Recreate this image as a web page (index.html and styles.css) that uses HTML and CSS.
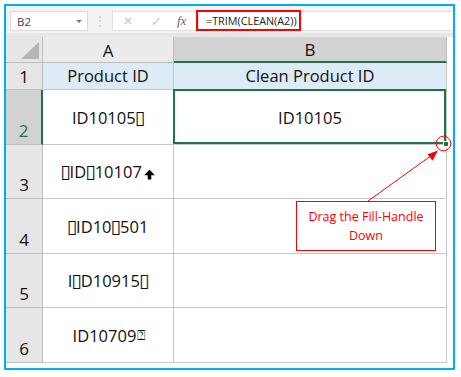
FILE: index.html
```html
<!DOCTYPE html>
<html>
<head>
<meta charset="utf-8">
<link rel="stylesheet" href="styles.css">
</head>
<body>
<div class="frame">
  <div class="toolbar">
    <div class="namebox"><span>B2</span><span class="dd"></span></div>
    <div class="dots">⋮</div>
    <div class="fbtns"><span class="x">✕</span><span class="ok">✓</span><span class="fx">fx</span></div>
    <div class="fbox"><span class="formula">=TRIM(CLEAN(A2))</span></div>
  </div>
  <div class="sheet">
    <div class="c corner"><span class="tri"></span></div>
    <div class="c colh">A</div>
    <div class="c colh sel">B</div>

    <div class="c rowh mid">1</div>
    <div class="c hdr">Product ID</div>
    <div class="c hdr">Clean Product ID</div>

    <div class="c rowh rsel">2</div>
    <div class="c val">ID10105<span class="tofu">▯</span></div>
    <div class="c val active">ID10105<span class="handle"></span></div>

    <div class="c rowh">3</div>
    <div class="c val"><span class="tofu">▯</span>ID<span class="tofu">▯</span>10107<svg class="up" width="11" height="11" viewBox="0 0 10 10"><path d="M5 0.5 L9.8 5.6 L6.6 5.6 L6.6 9.5 L3.4 9.5 L3.4 5.6 L0.2 5.6 Z" fill="#000"/></svg></div>
    <div class="c"></div>

    <div class="c rowh">4</div>
    <div class="c val"><span class="tofu">▯</span>ID10<span class="tofu">▯</span>501</div>
    <div class="c"></div>

    <div class="c rowh">5</div>
    <div class="c val">I<span class="tofu">▯</span>D10915<span class="tofu">▯</span></div>
    <div class="c"></div>

    <div class="c rowh">6</div>
    <div class="c val shift">ID10709<span class="q">⍰</span></div>
    <div class="c"></div>
  </div>
  <div class="callout">Drag the Fill-Handle<br>Down</div>
  <svg class="overlay" width="447" height="363" viewBox="0 0 447 363">
    <circle cx="437.5" cy="137.5" r="7.3" fill="none" stroke="#ff0000" stroke-width="1"/>
    <line x1="362" y1="195" x2="426" y2="149" stroke="#ff0000" stroke-width="1"/>
    <path d="M432 144.5 L421.5 148.2 L426.5 154.8 Z" fill="#ff0000"/>
  </svg>
</div>
</body>
</html>
```
FILE: styles.css
```css
* { box-sizing: border-box; }
html, body { margin: 0; padding: 0; background: #ffffff; }
body { padding: 4px; }

.frame {
  position: relative;
  width: 451px;
  height: 366px;
  border: 2px solid #00b0f0;
  background: #ffffff;
  font-family: "Open Sans", "Noto Sans", sans-serif;
  overflow: hidden;
}

.toolbar {
  height: 31px;
  background: #f3f3f3;
  border-bottom: 4px solid #e6e6e6;
  display: flex;
  align-items: flex-start;
  padding-top: 5px;
  padding-left: 4px;
}

.namebox {
  width: 78px;
  height: 20px;
  background: #ffffff;
  border: 1px solid #dadada;
  display: flex;
  align-items: center;
  justify-content: space-between;
  padding: 0 5px 0 6px;
  font-size: 11.5px;
  color: #444;
}
.dd {
  width: 0; height: 0;
  border-left: 3px solid transparent;
  border-right: 3px solid transparent;
  border-top: 3px solid #777;
}
.dots {
  width: 22px;
  text-align: center;
  color: #c8c8c8;
  font-size: 12px;
  line-height: 20px;
  margin-left: 1px;
}
.fbtns {
  width: 86px;
  height: 20px;
  background: #ffffff;
  border: 1px solid #e0e0e0;
  border-right: none;
  display: flex;
  align-items: center;
  padding-left: 10px;
  margin-left: 1px;
  font-family: "DejaVu Sans", sans-serif;
}
.fbtns .x { color: #c6c6c6; font-size: 12px; width: 28px; }
.fbtns .ok { color: #c6c6c6; font-size: 13px; width: 26px; }
.fbtns .fx { color: #666; font-family: "Liberation Serif", serif; font-style: italic; font-size: 13px; }
.fbox {
  flex: 1;
  height: 20px;
  background: #ffffff;
  border: 1px solid #e0e0e0;
  border-right: none;
  position: relative;
}
.formula {
  position: absolute;
  left: -3px;
  top: -2px;
  width: 105px;
  height: 21px;
  border: 2px solid #ff0000;
  font-size: 10.8px;
  line-height: 17px;
  padding-left: 8px;
  color: #222;
  white-space: nowrap;
}

.sheet {
  display: grid;
  grid-template-columns: 37px 131px 273px;
  grid-template-rows: 26px 27px 55px 54px 55px 54px 55px;
  font-size: 16.5px;
  color: #111;
}
.c {
  border-right: 1px solid #c6c6c6;
  border-bottom: 1px solid #c6c6c6;
  display: flex;
  align-items: center;
  justify-content: center;
  position: relative;
  white-space: nowrap;
}
.corner { background: #e6e6e6; border-color: #bdbdbd; }
.tri {
  position: absolute;
  right: 3px;
  bottom: 3px;
  width: 0; height: 0;
  border-left: 18px solid transparent;
  border-bottom: 17px solid #b5b5b5;
}
.colh { background: #ebebeb; font-size: 17px; padding-top: 1px; border-color: #bdbdbd; }
.colh.sel { background: #d2d2d2; border-bottom: 2px solid #217346; }
.rowh {
  background: #e6e6e6;
  align-items: flex-end;
  padding-bottom: 2px;
  font-size: 17px;
  border-color: #bdbdbd;
}
.rowh.mid { align-items: center; padding-bottom: 0; }
.rowh.rsel { background: #d2d2d2; border-right: 2px solid #217346; color: #217346; }
.hdr { background: #ddebf7; padding-bottom: 1px; }
.val { padding-bottom: 0; }
.val.shift { padding-left: 2px; }
.tofu { font-family: "DejaVu Sans", sans-serif; font-size: 19px; line-height: 1; margin: 0 -1px; }
.q { font-family: "DejaVu Sans", sans-serif; font-size: 14px; line-height: 1; margin-left: 1px; }
.up { margin-left: 2px; margin-top: 5px; }

.active::after {
  content: "";
  position: absolute;
  left: -1px; top: -1px; right: 0; bottom: 0;
  border: 2px solid #217346;
}
.handle {
  position: absolute;
  right: -3px;
  bottom: -3px;
  width: 6px;
  height: 6px;
  background: #217346;
  border: 1px solid #ffffff;
  z-index: 2;
}

.callout {
  position: absolute;
  left: 290px;
  top: 195px;
  width: 140px;
  height: 50px;
  background: #ffffff;
  border: 1px solid #ff0000;
  color: #ff0000;
  font-size: 12.5px;
  line-height: 19px;
  text-align: center;
  padding-top: 5px;
}
.overlay {
  position: absolute;
  left: 0;
  top: 0;
  pointer-events: none;
}
```
